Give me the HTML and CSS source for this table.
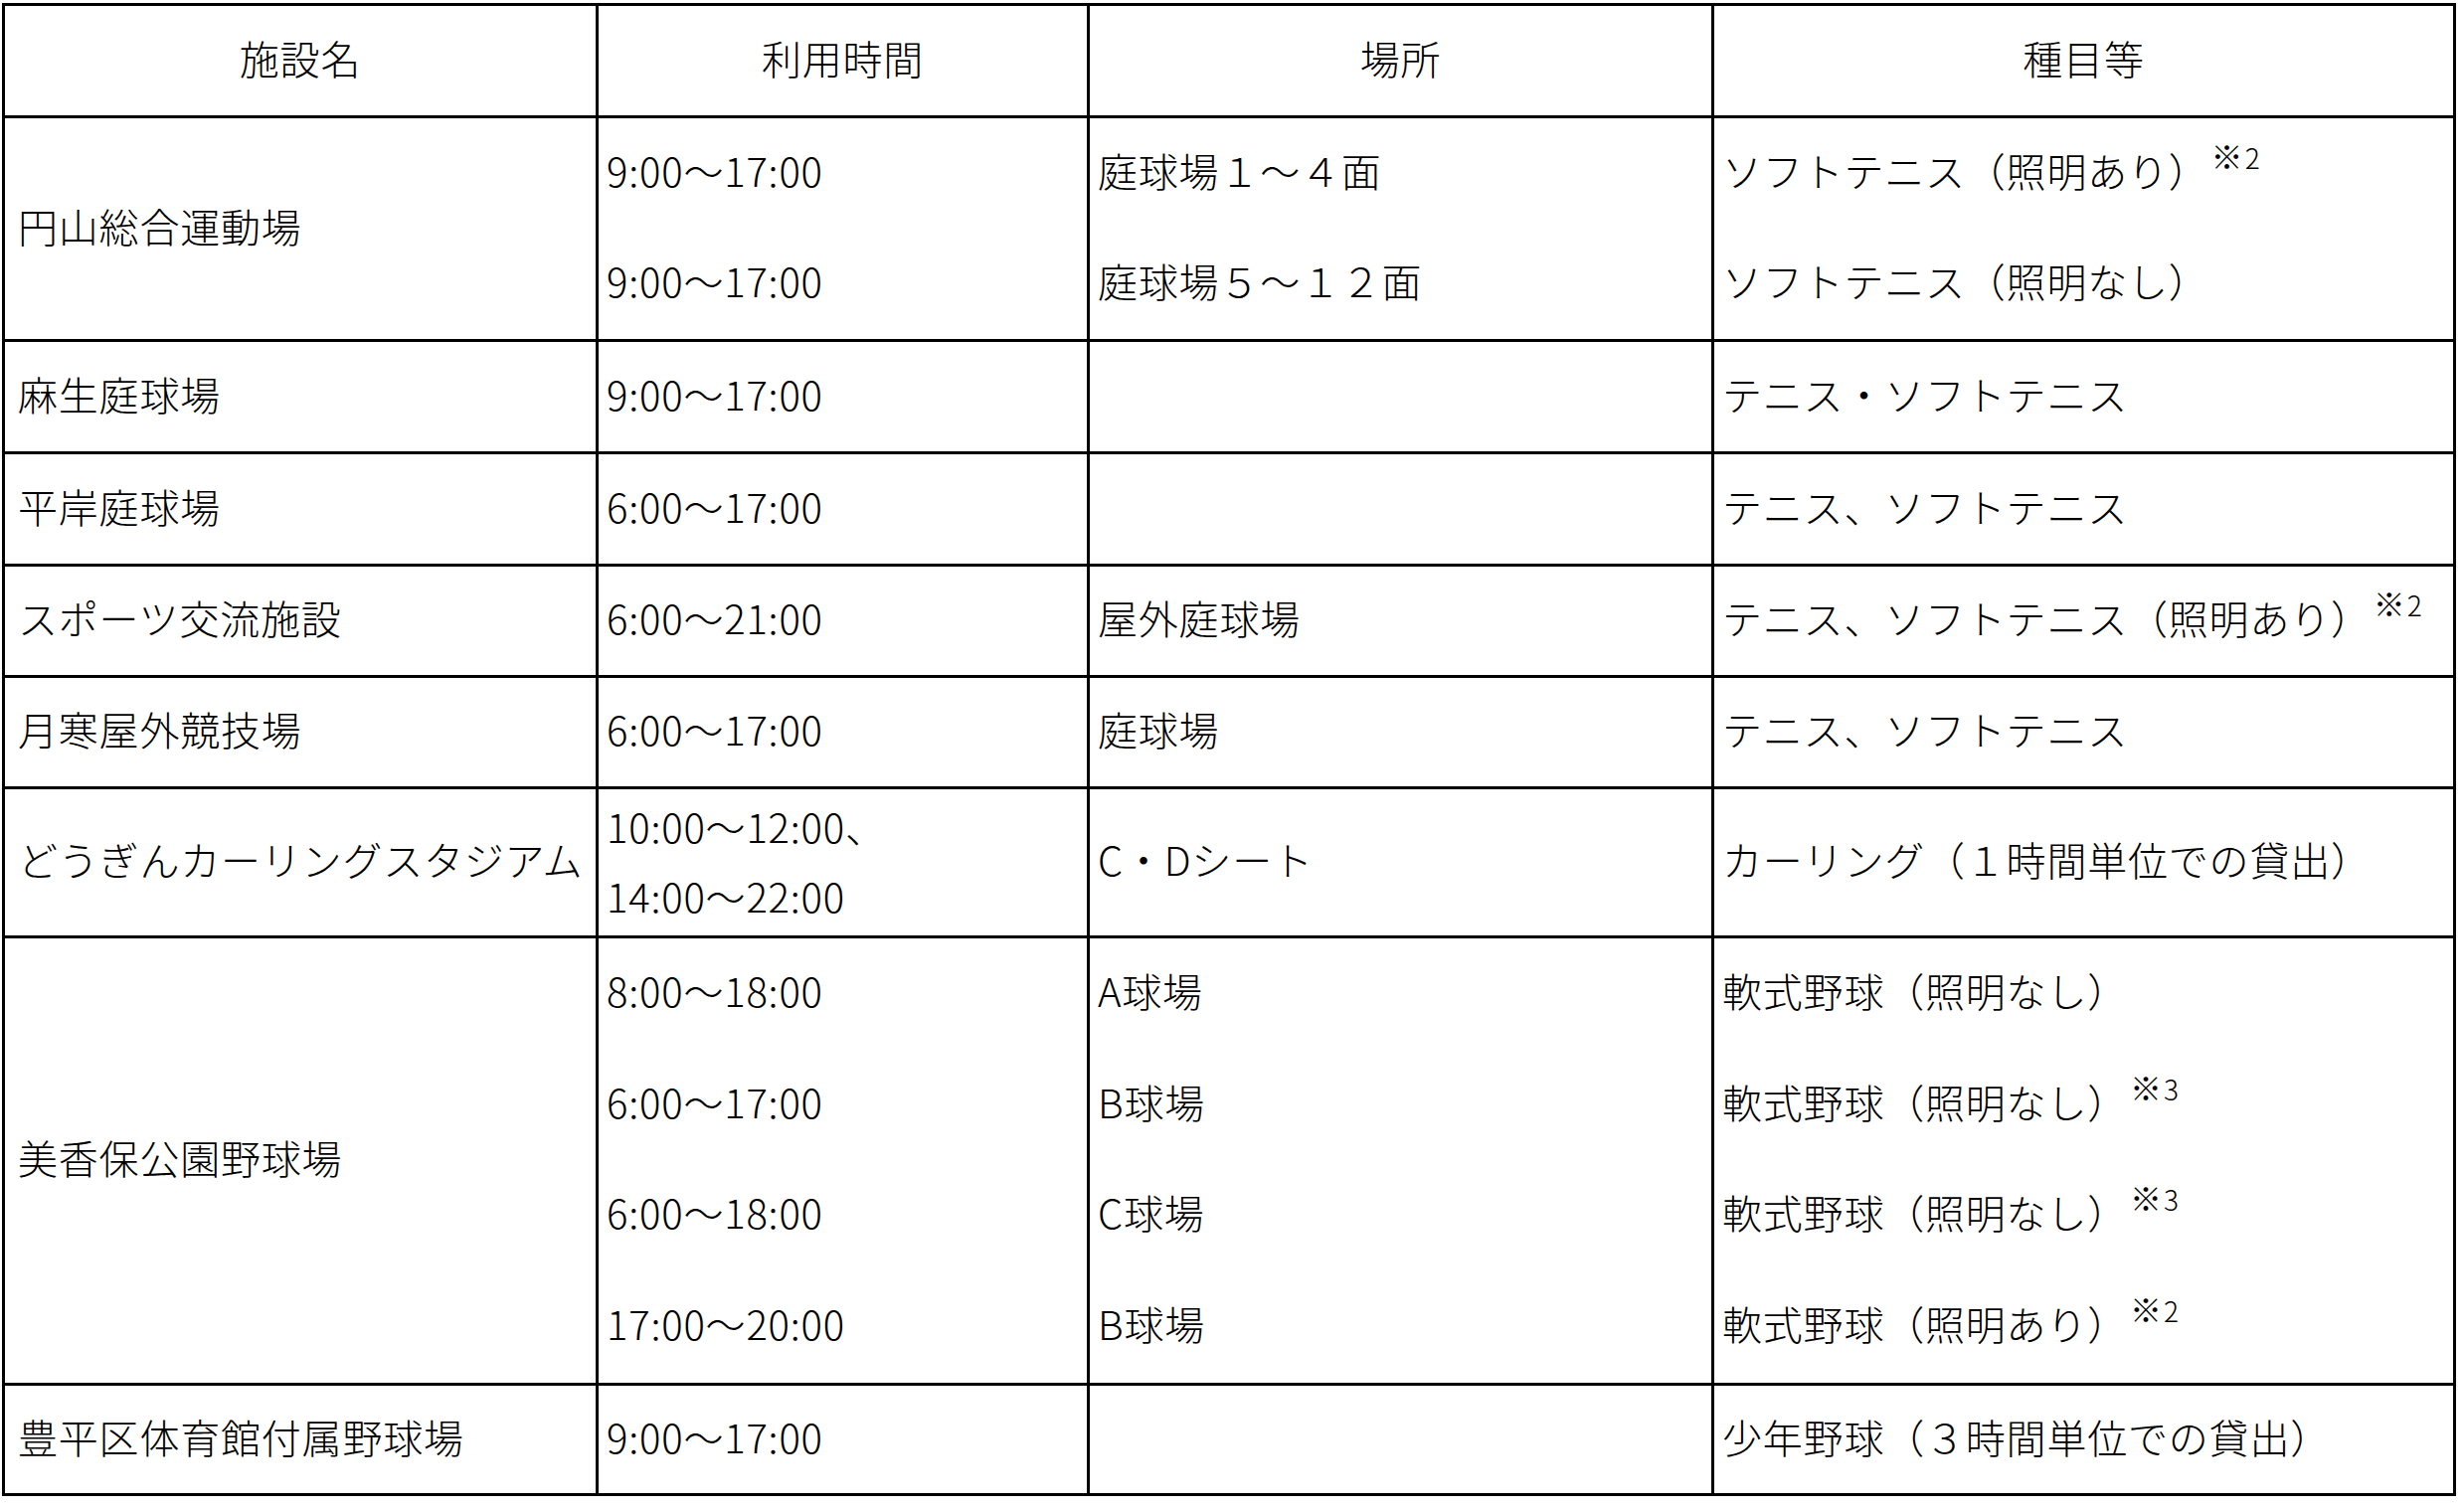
FILE: index.html
```html
<!DOCTYPE html>
<html lang="ja">
<head>
<meta charset="utf-8">
<title>施設一覧</title>
<link rel="stylesheet" href="styles.css">
</head>
<body>
<div class="table">
  <div class="cell head">施設名</div>
  <div class="cell head">利用時間</div>
  <div class="cell head">場所</div>
  <div class="cell head">種目等</div>

  <div class="cell name">円山総合運動場</div>
  <div class="cell multi"><div class="line"><div>9:00～17:00</div></div><div class="line"><div>9:00～17:00</div></div></div>
  <div class="cell multi"><div class="line"><div>庭球場１～４面</div></div><div class="line"><div>庭球場５～１２面</div></div></div>
  <div class="cell multi"><div class="line"><div>ソフトテニス（照明あり）<span class="note"><span class="kome">※</span>2</span></div></div><div class="line"><div>ソフトテニス（照明なし）</div></div></div>

  <div class="cell name">麻生庭球場</div>
  <div class="cell">9:00～17:00</div>
  <div class="cell"></div>
  <div class="cell">テニス・ソフトテニス</div>

  <div class="cell name">平岸庭球場</div>
  <div class="cell">6:00～17:00</div>
  <div class="cell"></div>
  <div class="cell">テニス、ソフトテニス</div>

  <div class="cell name">スポーツ交流施設</div>
  <div class="cell">6:00～21:00</div>
  <div class="cell">屋外庭球場</div>
  <div class="cell"><div>テニス、ソフトテニス（照明あり）<span class="note"><span class="kome">※</span>2</span></div></div>

  <div class="cell name">月寒屋外競技場</div>
  <div class="cell">6:00～17:00</div>
  <div class="cell">庭球場</div>
  <div class="cell">テニス、ソフトテニス</div>

  <div class="cell name">どうぎんカーリングスタジアム</div>
  <div class="cell"><div class="two">10:00～12:00、<br>14:00～22:00</div></div>
  <div class="cell">C・Dシート</div>
  <div class="cell">カーリング（１時間単位での貸出）</div>

  <div class="cell name">美香保公園野球場</div>
  <div class="cell multi"><div class="line"><div>8:00～18:00</div></div><div class="line"><div>6:00～17:00</div></div><div class="line"><div>6:00～18:00</div></div><div class="line"><div>17:00～20:00</div></div></div>
  <div class="cell multi"><div class="line"><div>A球場</div></div><div class="line"><div>B球場</div></div><div class="line"><div>C球場</div></div><div class="line"><div>B球場</div></div></div>
  <div class="cell multi"><div class="line"><div>軟式野球（照明なし）</div></div><div class="line"><div>軟式野球（照明なし）<span class="note"><span class="kome">※</span>3</span></div></div><div class="line"><div>軟式野球（照明なし）<span class="note"><span class="kome">※</span>3</span></div></div><div class="line"><div>軟式野球（照明あり）<span class="note"><span class="kome">※</span>2</span></div></div></div>

  <div class="cell name">豊平区体育館付属野球場</div>
  <div class="cell">9:00～17:00</div>
  <div class="cell"></div>
  <div class="cell">少年野球（３時間単位での貸出）</div>
</div>
</body>
</html>
```

FILE: styles.css
```css
html, body {
  margin: 0;
  padding: 0;
  background: #fff;
}

body {
  font-family: "Noto Sans CJK JP", "Noto Sans", sans-serif;
  font-weight: 300;
  font-size: 40px;
  letter-spacing: 0.8px;
  color: #000;
}

.table {
  display: grid;
  grid-template-columns: 597px 494px 628px 746px;
  grid-template-rows: 113px 225px 113px 113px 112px 112px 150px 450px 111px;
  width: max-content;
  margin: 3px 0 0 2px;
  border-top: 3px solid #000;
  border-left: 3px solid #000;
}

.cell {
  box-sizing: border-box;
  border-right: 3px solid #000;
  border-bottom: 3px solid #000;
  padding: 0 8px 7px;
  display: flex;
  flex-direction: column;
  justify-content: center;
  line-height: 1.2;
  white-space: nowrap;
}

.cell.name {
  padding-left: 13px;
}

.cell.head {
  align-items: center;
}

.cell.multi {
  justify-content: stretch;
  padding-bottom: 0;
}

.line {
  flex: 1;
  display: flex;
  align-items: center;
  padding-bottom: 8px;
}

.two {
  line-height: 70px;
  padding-top: 4px;
}

.note {
  font-size: 28px;
  letter-spacing: 0;
  vertical-align: 18px;
  margin-left: 2px;
  line-height: 0;
}

.kome {
  font-size: 32px;
  margin-right: 2px;
}
```
